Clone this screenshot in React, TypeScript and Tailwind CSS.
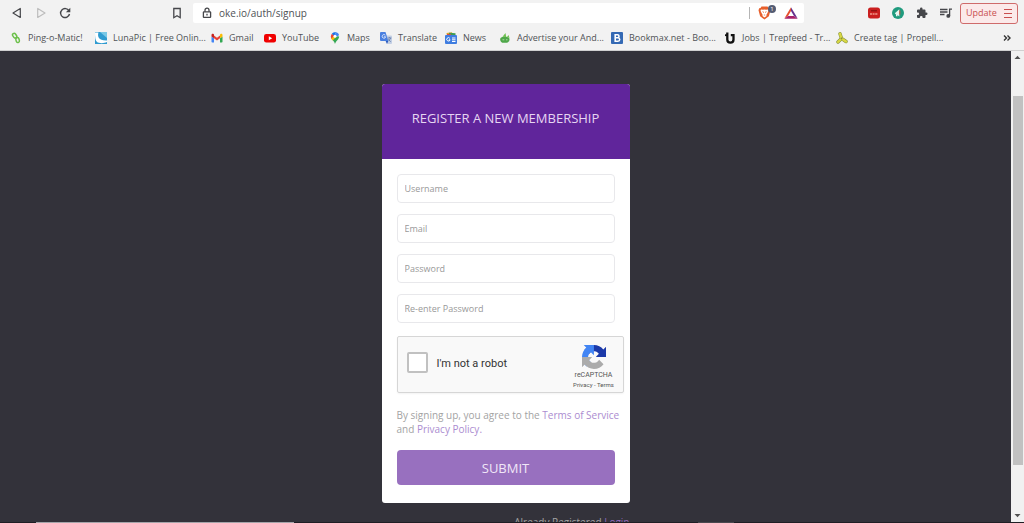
import type { ReactNode } from "react";
import { useState } from "react";

type Bookmark = {
  label: string;
  width: string;
  icon: ReactNode;
};

const bookmarks: Bookmark[] = [
  {
    label: "Ping-o-Matic!",
    width: "w-[85px]",
    icon: (
      <svg viewBox="0 0 12 12" className="size-3" fill="none" stroke="#6cc04a" strokeWidth="1.5">
        <rect x="3" y="1.200" width="3.200" height="5" rx="1.600" transform="rotate(-35 4.600 3.600)" />
        <rect x="6" y="5.600" width="3.200" height="5" rx="1.600" transform="rotate(-15 7.500 8)" />
      </svg>
    ),
  },
  {
    label: "LunaPic | Free Onlin...",
    width: "w-[116px]",
    icon: (
      <svg viewBox="0 0 12 12" className="size-3">
        <path fill="#2f9bd0" d="M0 0h12v12H0z" />
        <path fill="#79c8e6" d="M5 0h7v6z" />
        <path fill="#fff" d="M0 .5h3.500C2 4.500 4 9 12 8.500V10c-3 1.500-8 1.500-10 0C.3 8.500 0 5 0 .5z" />
      </svg>
    ),
  },
  {
    label: "Gmail",
    width: "w-[53px]",
    icon: (
      <svg viewBox="0 0 12 12" className="size-3">
        <path fill="#4285f4" d="M.5 4.500 3 6.300V10.500H1.300A.8.8 0 0 1 .5 9.700z" />
        <path fill="#34a853" d="M11.500 4.500 9 6.300v4.200h1.700a.8.8 0 0 0 .8-.8z" />
        <path fill="#ea4335" d="M3 3.400 6 5.700l3-2.300v2.900L6 8.600 3 6.300z" />
        <path fill="#c5221f" d="M.5 3c0-1.200 1.200-1.500 2-1l.5.500v3.800L.5 4.500z" />
        <path fill="#fbbc04" d="M11.500 3c0-1.200-1.200-1.500-2-1l-.5.500v3.800l2.500-1.800z" />
      </svg>
    ),
  },
  {
    label: "YouTube",
    width: "w-[65px]",
    icon: (
      <svg viewBox="0 0 12 12" className="size-3">
        <rect x="0" y="2" width="12" height="8.500" rx="2.200" fill="#f00000" />
        <path fill="#fff" d="m4.800 4.300 3.400 2-3.400 2z" />
      </svg>
    ),
  },
  {
    label: "Maps",
    width: "w-[51px]",
    icon: (
      <svg viewBox="0 0 12 12" className="size-3">
        <path fill="#34a853" d="M6 12c-.4-2.500-3-4-3.800-6L6 4l4.200.5C10 7.500 6.800 9 6 12z" />
        <path fill="#fbbc04" d="M2.200 6.300 5 3l2 2-3.300 3.600C3 7.800 2.400 7.200 2.200 6.300z" />
        <path fill="#ea4335" d="M1.900 4.300c0-1 .4-1.800 1-2.500l2.500 2L2.300 6.500C2 6 1.900 5 1.900 4.300z" />
        <path fill="#1a73e8" d="M2.900 1.800C4 .2 6 0 7.300.3L5.200 4z" />
        <path fill="#4285f4" d="M7.300.3c1.500.4 2.500 1.500 2.800 2.900L7 5 5.200 3.500z" />
        <circle cx="6" cy="4.200" r="1.500" fill="#fff" />
      </svg>
    ),
  },
  {
    label: "Translate",
    width: "w-[65px]",
    icon: (
      <svg viewBox="0 0 12 12" className="size-3">
        <path fill="#c3cfe4" d="M5 3.500h6a1 1 0 0 1 1 1V11a1 1 0 0 1-1 1H7.500z" />
        <path fill="#4a80e0" d="M1 0h4.500L8.300 9H1a1 1 0 0 1-1-1V1a1 1 0 0 1 1-1z" />
        <path fill="#2c5cc0" d="M5.600 9h2.700L7 12z" />
        <path fill="none" stroke="#dfe8fa" strokeWidth=".9" d="M5.300 3.200a1.800 1.800 0 1 0 .4 1.600H3.900" />
        <path fill="none" stroke="#5f7aa8" strokeWidth=".8" d="M7.800 6h3.500M9.600 5.200V6M8.400 7.200l2.300 2.600M10.700 6.200 8.700 9" />
      </svg>
    ),
  },
  {
    label: "News",
    width: "w-[54px]",
    icon: (
      <svg viewBox="0 0 12 12" className="size-3">
        <path fill="#e0a526" d="M1.500 1 7 .2 8 4H2z" />
        <path fill="#3f9b52" d="m4 .8 6.500.4V5H4z" />
        <path fill="#d9503f" d="M2 2h4v2H2z" />
        <rect y="3" width="12" height="9" rx="1" fill="#3f7de0" />
        <path fill="none" stroke="#fff" d="M4.800 6.300a1.700 1.700 0 1 0 .3 1.500H3.800M7 6h3.500M7 7.800h3.500M7 9.500h3.500" />
      </svg>
    ),
  },
  {
    label: "Advertise your And...",
    width: "w-[112px]",
    icon: (
      <svg viewBox="0 0 12 12" className="size-3">
        <path fill="#4fa84a" d="M1.500 6c1.500-1.600 7-1.800 8.800.3.700 2-.4 4-2.200 4.500H4C1.800 10.700.5 8 1.500 6z" />
        <path fill="#6fbf4f" d="M3.500 4.800 6.500 1l.7 4zM8 5l1.500-2 1 3z" />
        <path stroke="#d8edcf" strokeWidth=".7" d="M3.500 7.800h1.800M7 7.800h1.500" />
      </svg>
    ),
  },
  {
    label: "Bookmax.net - Boo...",
    width: "w-[113px]",
    icon: (
      <svg viewBox="0 0 12 12" className="size-3">
        <rect width="12" height="12" rx="1" fill="#3469b4" />
        <path fill="none" stroke="#fff" strokeWidth="1.600" d="M4.200 2.800h2.300a1.500 1.500 0 0 1 0 3H4.200zM4.200 5.800H7a1.700 1.700 0 0 1 0 3.400H4.200z" />
      </svg>
    ),
  },
  {
    label: "Jobs | Trepfeed - Tr...",
    width: "w-[112px]",
    icon: (
      <svg viewBox="0 0 12 12" className="size-3" fill="none" stroke="#111" strokeWidth="2.300">
        <path d="M3.300.5v7c0 4.200 6.200 4.200 6.200 0V3.200H6.800" />
        <path d="M1 3.200h3" strokeWidth="1.800" />
      </svg>
    ),
  },
  {
    label: "Create tag | Propell...",
    width: "w-[112px]",
    icon: (
      <svg viewBox="0 0 12 12" className="size-3">
        <path
          fill="none"
          stroke="#86923a"
          strokeWidth="3.400"
          strokeLinecap="round"
          d="M4 1.800 5.500 6.500l4.500 3M5.500 6.500 2 10"
        />
        <path
          fill="none"
          stroke="#d9d843"
          strokeWidth="2.400"
          strokeLinecap="round"
          d="M4 1.800 5.500 6.500l4.500 3M5.500 6.500 2 10"
        />
        <circle cx="5.500" cy="6.500" r="1" fill="#86923a" />
      </svg>
    ),
  },
];

const fields = [
  { id: "username", label: "Username", type: "text" },
  { id: "email", label: "Email", type: "email" },
  { id: "password", label: "Password", type: "password" },
  { id: "password2", label: "Re-enter Password", type: "password" },
];

function Toolbar() {
  return (
    <div className="flex h-[26px] items-center text-[#45464a]">
      <div className="flex w-[193px] shrink-0 items-center pl-[11px]">
        <button type="button" aria-label="Back">
          <svg viewBox="0 0 12 12" className="size-3" fill="none" stroke="currentColor" strokeWidth="1.200">
            <path d="M9.300 1.500v9L2 6z" strokeLinejoin="round" />
          </svg>
        </button>
        <button type="button" aria-label="Forward" className="ml-3 text-[#bdbdbd]">
          <svg viewBox="0 0 12 12" className="size-3" fill="none" stroke="currentColor" strokeWidth="1.200">
            <path d="M2.700 1.500v9L10 6z" strokeLinejoin="round" />
          </svg>
        </button>
        <button type="button" aria-label="Reload" className="ml-3">
          <svg viewBox="0 0 12 12" className="size-3" fill="none" stroke="currentColor" strokeWidth="1.400">
            <path d="M10 3.800A4.500 4.500 0 1 0 10.500 7" />
            <path fill="currentColor" stroke="none" d="M11.300.8v4.400H6.900z" />
          </svg>
        </button>
        <button type="button" aria-label="Bookmark this page" className="mr-[10px] ml-auto">
          <svg viewBox="0 0 12 12" className="size-3" fill="none" stroke="currentColor" strokeWidth="1.300">
            <path d="M2.800 1.500h6.400v9.200L6 8.800l-3.200 1.900z" />
          </svg>
        </button>
      </div>
      <div className="flex h-5 min-w-0 flex-1 items-center rounded-xs bg-white pr-[6px] pl-2">
        <svg viewBox="0 0 12 12" className="size-3 shrink-0" fill="none" stroke="currentColor" strokeWidth="1.300">
          <rect x="2.400" y="4.800" width="7.200" height="5.600" rx=".5" />
          <path d="M4 4.800V3.200a2 2 0 0 1 4 0v1.600M6 6.800v1.600" />
        </svg>
        <input
          type="text"
          aria-label="Address"
          defaultValue="oke.io/auth/signup"
          className="ml-[6px] min-w-0 flex-1 text-[10px] text-[#505256] outline-none"
        />
        <span className="mr-2 h-3 w-px bg-[#b5b5b5]" />
        <button type="button" aria-label="Shields" className="relative mr-2 w-[18px]">
          <svg viewBox="0 0 13 14" className="h-[14px] w-[13px]">
            <path fill="#e8602c" d="m3.500.5 6 0 1 1.500 1.300.3.700 2-1.600 6L6.500 13.600 2.100 10.300.5 4.300l.7-2L2.500 2z" />
            <path fill="#fff" d="m3 3.500 2 .3 1.500-.4 1.500.4 2-.3.500 1.200-1.200 2.600-1 1.700.3.900-2.100 1.500-2.100-1.500.3-.9-1-1.700-1.200-2.600z" />
            <path fill="#e8602c" d="m4.200 4.900 1.800 1-.5 1zm4.600 0L7 5.900l.5 1zM5.500 9l1-.6 1 .6-1 .5z" />
          </svg>
          <span className="absolute -top-px right-0 flex size-2 items-center justify-center rounded-full bg-[#545c73] text-[6px] leading-none text-white">
            1
          </span>
        </button>
        <button type="button" aria-label="Rewards">
          <svg viewBox="0 0 14 12" className="h-3 w-[14px]">
            <path fill="#e8502c" d="M7 .2.300 11.500 4 9l3-5z" />
            <path fill="#65318e" d="M7 .2l6.700 11.300L10 9 7 4z" />
            <path fill="#a8236b" d="M.3 11.700h13.400L10 9H4z" />
          </svg>
        </button>
      </div>
      <div className="flex w-[220px] shrink-0 items-center justify-end pr-[6px]">
        <button type="button" aria-label="Recorder" className="mr-3">
          <svg viewBox="0 0 12 12" className="size-3">
            <rect y=".5" width="12" height="11" rx="2.500" fill="#ca1f1f" />
            <path stroke="#7b0d0d" d="M3 3.800h6" />
            <path stroke="#f19a8c" strokeWidth="1.500" strokeDasharray="2 .6" d="M2 7h8" />
          </svg>
        </button>
        <button type="button" aria-label="Announcements" className="mr-3">
          <svg viewBox="0 0 12 12" className="size-3">
            <circle cx="6" cy="6" r="6" fill="#209b7e" />
            <path fill="#e9f6f2" d="m2.800 6.300 4.500-4v7.300L5.500 8v1.300H4V7.400z" />
            <path fill="#d9503f" d="M7.300 3.500h1v4h-1z" />
          </svg>
        </button>
        <button type="button" aria-label="Extensions" className="mr-3">
          <svg viewBox="0 0 24 24" className="size-3" fill="currentColor">
            <path d="M20.500 11H19V7a2 2 0 0 0-2-2h-4V3.500a2.500 2.500 0 0 0-5 0V5H4a2 2 0 0 0-2 2v3.800h1.500a2.700 2.700 0 0 1 0 5.400H2V20a2 2 0 0 0 2 2h3.800v-1.500a2.700 2.700 0 0 1 5.400 0V22H17a2 2 0 0 0 2-2v-4h1.500a2.500 2.500 0 0 0 0-5z" />
          </svg>
        </button>
        <button type="button" aria-label="Media" className="mr-2">
          <svg viewBox="0 0 12 12" className="size-3" fill="none" stroke="currentColor" strokeWidth="1.300">
            <path d="M0 2.500h7.500M0 5h7.500M0 7.500h4.500M9.600 9V2.200H12" />
            <circle cx="8.300" cy="8.900" r="1.300" fill="currentColor" />
          </svg>
        </button>
        <button
          type="button"
          className="flex h-[21px] w-[58px] items-center justify-between rounded-[3px] border border-[#cf6b6b] bg-[#fbeaea] px-[5px] text-[9px] text-[#c94f4f]"
        >
          Update
          <svg viewBox="0 0 8 9" className="h-[9px] w-2" stroke="currentColor">
            <path d="M0 .5h8M0 4.500h8M0 8.500h8" />
          </svg>
        </button>
      </div>
    </div>
  );
}

function BookmarksBar() {
  return (
    <nav className="flex h-6 items-center overflow-hidden pr-[13px] pl-[10px] text-[9px] text-[#505256]">
      {bookmarks.map((item) => (
        <a key={item.label} href="#" className={`flex shrink-0 items-center gap-[6px] whitespace-nowrap ${item.width}`}>
          <span className="shrink-0">{item.icon}</span>
          {item.label}
        </a>
      ))}
      <button type="button" aria-label="More bookmarks" className="ml-auto text-[#333]">
        <svg viewBox="0 0 8 8" className="size-2" fill="none" stroke="currentColor" strokeWidth="1.400">
          <path d="m1 1.500 2.500 2.500L1 6.500M4.500 1.500 7 4 4.500 6.500" />
        </svg>
      </button>
    </nav>
  );
}

function Captcha() {
  return (
    <div className="mt-[13px] -mr-[9px] flex h-[57px] items-center rounded-[2px] border border-[#d6d6d6] bg-[#f9f9f9] pr-1 pl-[9px] font-['Roboto',sans-serif] shadow-xs">
      <input
        id="robot"
        type="checkbox"
        className="mb-1 size-[21px] shrink-0 appearance-none rounded-[2px] border-2 border-[#c1c1c1] bg-white checked:bg-[#4a90e2]"
      />
      <label htmlFor="robot" className="ml-[9px] flex-1 text-[11px] text-[#333]">
        I'm not a robot
      </label>
      <div className="flex w-[50px] flex-col items-center pt-1 text-[#555]">
        <svg viewBox="0 0 64 64" className="size-6">
          <path
            fill="#1c3aa9"
            d="M64 31.955l-.033-1.370V4.687l-7.160 7.160C50.948 4.674 42.033.093 32.050.093c-10.400 0-19.622 4.960-25.458 12.640l11.736 11.860a15.550 15.550 0 0 1 4.754-5.334c2.050-1.600 4.952-2.906 8.968-2.906.485 0 .86.057 1.135.163 4.976.393 9.288 3.140 11.828 7.124l-8.307 8.307L64 31.953"
          />
          <path
            fill="#4285f4"
            d="M31.862.094l-1.370.033H4.594l7.160 7.160C4.580 13.147 0 22.060 0 32.046c0 10.400 4.960 19.622 12.640 25.458L24.500 45.768a15.550 15.550 0 0 1-5.334-4.754c-1.600-2.050-2.906-4.952-2.906-8.968 0-.485.057-.86.163-1.135.393-4.976 3.140-9.288 7.124-11.828l8.307 8.307L31.860.095"
          />
          <path
            fill="#ababab"
            d="M.001 32.045l.033 1.370v25.898l7.160-7.160c5.860 7.173 14.774 11.754 24.760 11.754 10.400 0 19.622-4.960 25.458-12.640l-11.736-11.860a15.550 15.550 0 0 1-4.754 5.334c-2.050 1.600-4.952 2.906-8.968 2.906-.485 0-.86-.057-1.135-.163-4.976-.393-9.288-3.140-11.828-7.124l8.307-8.307-27.292.03"
          />
        </svg>
        <span className="mt-[2px] text-[7px] leading-[9px]">reCAPTCHA</span>
        <span className="text-[6px] leading-[9px]">
          <a href="#">Privacy</a> - <a href="#">Terms</a>
        </span>
      </div>
    </div>
  );
}

function SignupCard() {
  const [values, setValues] = useState<Record<string, string>>({});

  return (
    <div className="w-[248px] shrink-0">
      <form className="overflow-hidden rounded-[3px] bg-white" onSubmit={(e) => e.preventDefault()}>
        <h1 className="h-[75px] bg-[#60259b] pt-6 text-center text-[13px] leading-5 text-[#e6d6f2]">
          REGISTER A NEW MEMBERSHIP
        </h1>
        <div className="px-[15px] pt-[15px] pb-[18px]">
          <div className="flex flex-col gap-[11px]">
            {fields.map((field) => (
              <input
                key={field.id}
                id={field.id}
                type={field.type}
                aria-label={field.label}
                placeholder={field.label}
                value={values[field.id] ?? ""}
                onChange={(e) => setValues({ ...values, [field.id]: e.target.value })}
                className="h-[29px] w-full rounded-[4px] border border-[#e8e8eb] px-[7px] text-[9px] text-[#555] outline-none placeholder:text-[#999]"
              />
            ))}
          </div>
          <Captcha />
          <p className="mt-[15px] -mr-2 text-[10px] leading-[14px] text-[#a3a3a3]">
            By signing up, you agree to the{" "}
            <a href="#" className="text-[#ab8cd0]">
              Terms of Service
            </a>{" "}
            and{" "}
            <a href="#" className="text-[#ab8cd0]">
              Privacy Policy.
            </a>
          </p>
          <button
            type="submit"
            className="mt-[14px] h-[35px] w-full rounded-[4px] bg-[#9870bf] text-[13px] leading-5 text-[#f0e6f7]"
          >
            SUBMIT
          </button>
        </div>
      </form>
      <p className="mt-3 text-right text-[10px] leading-[14px] whitespace-nowrap text-[#a3a3a3]">
        Already Registered{" "}
        <a href="#" className="text-[#8f68b8]">
          Login
        </a>
      </p>
    </div>
  );
}

function Scrollbar() {
  return (
    <div className="flex w-[13px] shrink-0 flex-col items-center bg-[#f1f1f1] text-[#505050]" aria-hidden>
      <svg viewBox="0 0 13 13" className="size-[13px] shrink-0" fill="currentColor">
        <path d="M3.500 8h6l-3-3.200z" />
      </svg>
      <div className="mt-8 w-[10px] flex-1 bg-[#c1c1c1]" />
      <svg viewBox="0 0 13 13" className="mt-11 size-[13px] shrink-0" fill="currentColor">
        <path d="M3.500 5h6l-3 3.200z" />
      </svg>
    </div>
  );
}

export default function App() {
  return (
    <div className="flex h-screen flex-col overflow-hidden bg-[#33323a] font-['Open_Sans',sans-serif]">
      <header className="shrink-0 border-b border-[#d0d0d0] bg-[#f2f2f2]">
        <Toolbar />
        <BookmarksBar />
      </header>
      <div className="flex min-h-0 flex-1">
        <main className="flex min-w-0 flex-1 items-start justify-center overflow-hidden pt-[33px]">
          <SignupCard />
        </main>
        <Scrollbar />
      </div>
      {/* top edge of the desktop taskbar */}
      <div className="flex h-px shrink-0 bg-[#1f1e24] pl-9">
        <div className="w-[258px] bg-[#a5a5aa]" />
        <div className="ml-[404px] w-9 bg-[#4a494f]" />
      </div>
    </div>
  );
}
